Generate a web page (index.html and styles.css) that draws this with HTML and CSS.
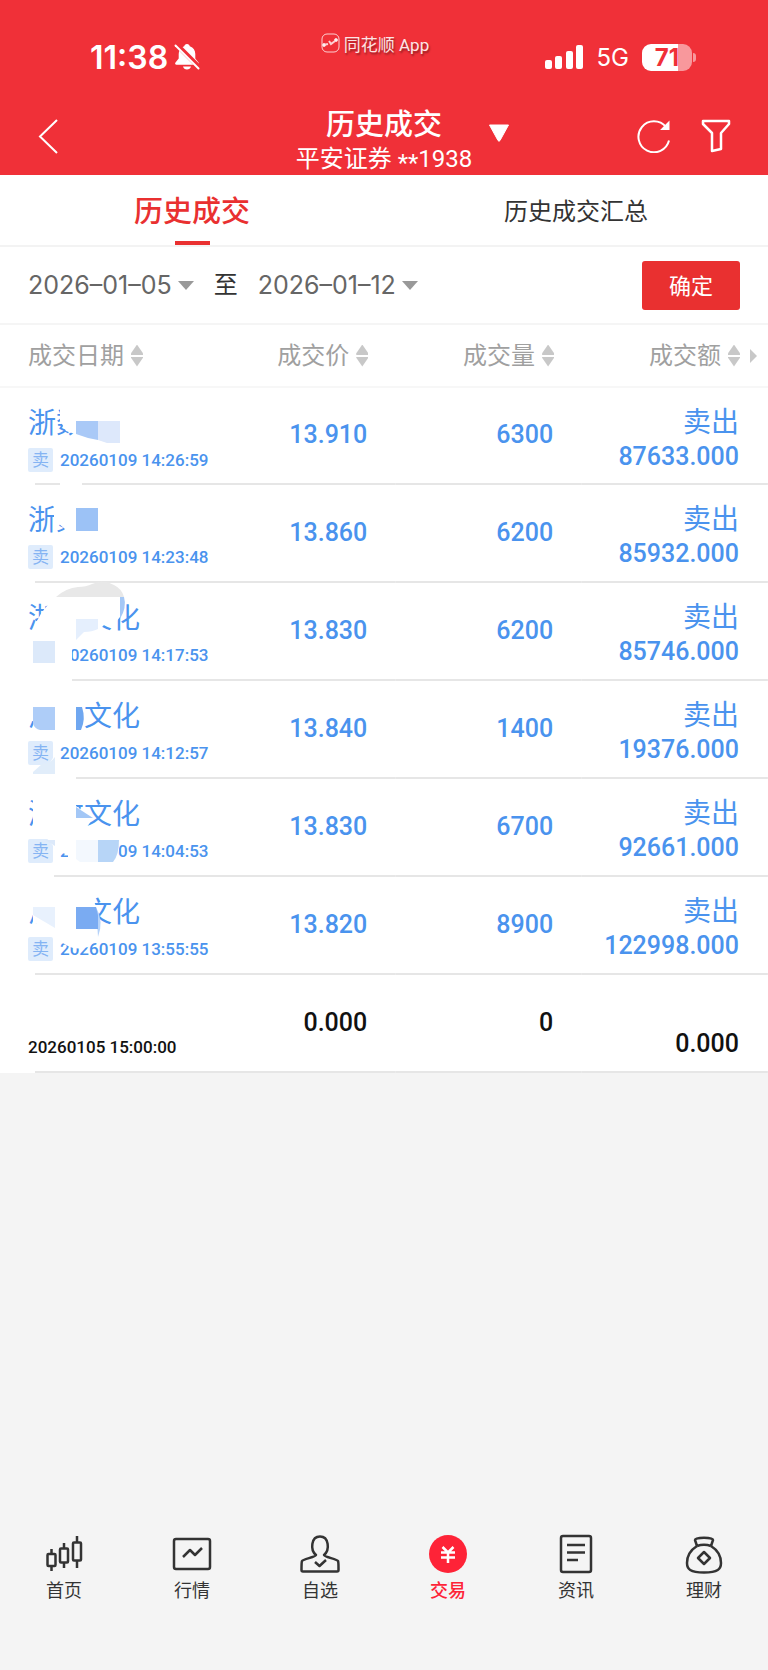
FILE: index.html
```
<!DOCTYPE html>
<html lang="zh-CN">

<head>
    <meta charset="UTF-8">
    <meta name="viewport" content="width=device-width, initial-scale=1.0">
    <title>历史成交</title>
    <link rel="stylesheet" href="styles.css">
</head>

<body>
    <header class="header">
        <div class="status">
            <div class="status-left">
                <span class="clock">11:38</span>
                <svg width="26" height="28" viewBox="0 0 26 28">
                    <path d="M13 1c-1.600 0-2.600 1-2.800 2.300C6.500 4.500 4.700 7.500 4.700 11v4.500L1.500 19.500c-.8 1.200-.3 2.300 1 2.300h21c1.300 0 1.800-1.100 1-2.300l-3.200-4V11c0-3.500-1.800-6.500-5.500-7.700C15.600 2 14.600 1 13 1zM9 23.500h8c-.5 2-2 3-4 3s-3.500-1-4-3z" fill="#fff"/>
                    <path d="M2 1L26 25" stroke="#f03038" stroke-width="5"/>
                    <path d="M1.500 2.500L24.500 25.500" stroke="#fff" stroke-width="2" stroke-linecap="round"/>
                </svg>
            </div>
            <div class="brand">
                <svg width="20" height="20" viewBox="0 0 20 20" fill="none" stroke="#fcd0d2">
                    <rect x="1" y="1" width="17" height="18" rx="5"/>
                    <path d="M2 12l5-1M8 8l2 3 4-3" stroke-width="2"/>
                    <circle cx="3" cy="12" r="1.500" fill="#fff"/>
                    <circle cx="15" cy="7" r="1.500" fill="#fff"/>
                </svg>
                <span>同花顺 App</span>
            </div>
            <div class="status-right">
                <svg width="39" height="24" viewBox="0 0 39 24" fill="#fff">
                    <rect x="0" y="15" width="7" height="9" rx="2"/>
                    <rect x="10" y="11" width="7" height="13" rx="2"/>
                    <rect x="21" y="6" width="7" height="18" rx="2"/>
                    <rect x="31" y="0" width="7" height="24" rx="2"/>
                </svg>
                <span class="network">5G</span>
                <span class="battery">71</span>
            </div>
        </div>
        <div class="navbar">
            <button class="icon-btn back" aria-label="返回">
                <svg width="22" height="36" viewBox="0 0 22 36" fill="none" stroke="#fff" stroke-width="2">
                    <path d="M20 2L3 18.500 20 35"/>
                </svg>
            </button>
            <div class="title">
                <h1>历史成交</h1>
                <p>平安证券 <span class="stars">**</span>1938</p>
            </div>
            <div class="nav-actions">
                <button class="icon-btn switch" aria-label="切换账户">
                    <svg width="22" height="18" viewBox="0 0 22 18">
                        <path d="M1.500 1h19L12 16.500q-1 1.500-2 0z" fill="#fff" stroke="#fff" stroke-linejoin="round"/>
                    </svg>
                </button>
                <button class="icon-btn" aria-label="刷新">
                    <svg width="34" height="34" viewBox="0 0 34 34" fill="none" stroke="#fff" stroke-width="2">
                        <path d="M32 21.500A15.500 15.500 0 1 1 29 8"/>
                        <path d="M31.500 4v6h-6z" fill="#fff"/>
                    </svg>
                </button>
                <button class="icon-btn" aria-label="筛选">
                    <svg width="30" height="34" viewBox="0 0 30 34" fill="none" stroke="#fff" stroke-width="2.500" stroke-linejoin="round">
                        <path d="M2 2h26v3l-8 9v16l-9 2V14L2 5z"/>
                    </svg>
                </button>
            </div>
        </div>
    </header>

    <div class="tabs">
        <button class="tab active">历史成交</button>
        <button class="tab">历史成交汇总</button>
    </div>

    <div class="filter">
        <button class="date">2026–01–05</button>
        <span class="to">至</span>
        <button class="date">2026–01–12</button>
        <button class="confirm">确定</button>
    </div>

    <table class="deals">
        <thead>
            <tr>
                <th><button class="sort">成交日期</button></th>
                <th><button class="sort">成交价</button></th>
                <th><button class="sort">成交量</button></th>
                <th><button class="sort">成交额</button><span class="more"></span></th>
            </tr>
        </thead>
        <tbody>
            <tr>
                <td>
                    <div class="name">浙数文化</div>
                    <div class="time"><span class="side">卖</span>20260109 14:26:59</div>
                    <svg class="mask" width="210" height="98" viewBox="0 0 210 98">
                        <path d="M60 14H145V52H75V46L66 43 62 36 60 33zM60 95H82V99H60z" fill="#fff"/>
                        <path d="M76 33H98V52L88 50 76 46z" fill="#a9c9f7"/>
                        <path d="M98 33H120V55H107L98 52z" fill="#dde8fb"/>
                    </svg>
                </td>
                <td>13.910</td>
                <td>6300</td>
                <td>
                    <div class="name">卖出</div>
                    <div class="amount">87633.000</div>
                </td>
            </tr>
            <tr>
                <td>
                    <div class="name">浙数文化</div>
                    <div class="time"><span class="side">卖</span>20260109 14:23:48</div>
                    <svg class="mask" width="210" height="98" viewBox="0 0 210 98">
                        <path d="M54 12H145V52H65V44L59 39 54 52z" fill="#fff"/>
                        <path d="M76 23H98V46H76z" fill="#9cc2f6"/>
                    </svg>
                </td>
                <td>13.860</td>
                <td>6200</td>
                <td>
                    <div class="name">卖出</div>
                    <div class="amount">85932.000</div>
                </td>
            </tr>
            <tr>
                <td>
                    <div class="name">浙数文化</div>
                    <div class="time"><span class="side">卖</span>20260109 14:17:53</div>
                    <svg class="mask" width="210" height="98" viewBox="0 0 210 98">
                        <path d="M56 14H120V34L116 39V41L104 42 98 48Q92 49 84 50L76 58 72 64V99H24V52L33 48Q39 28 56 14z" fill="#fff"/>
                        <path d="M56 14Q66 5 78 4 86 4 92 1 104-4 114 2 122 6 124 14z" fill="#e8e8e8"/>
                        <path d="M120 14H124Q127 24 120 36z" fill="#a5c8f6"/>
                        <path d="M33 58H55V80H33z" fill="#dce9fa"/>
                        <path d="M76 36H98V46Q92 49 84 49L76 57z" fill="#e5effd"/>
                    </svg>
                </td>
                <td>13.830</td>
                <td>6200</td>
                <td>
                    <div class="name">卖出</div>
                    <div class="amount">85746.000</div>
                </td>
            </tr>
            <tr>
                <td>
                    <div class="name">浙数文化</div>
                    <div class="time"><span class="side">卖</span>20260109 14:12:57</div>
                    <svg class="mask" width="210" height="98" viewBox="0 0 210 98">
                        <path d="M24 10H77L84 26V52H33V40H24zM24 95H76V99H24zM55 74V93H42z" fill="#fff"/>
                        <path d="M33 26H55V49H40Q35 48 33 43z" fill="#aecdf8"/>
                        <path d="M76 26H82Q86 38 81 49H76z" fill="#6fa7f0"/>
                        <path d="M55 76V93H33V91L42 83Q50 83 55 76z" fill="#e1edfa"/>
                    </svg>
                </td>
                <td>13.840</td>
                <td>1400</td>
                <td>
                    <div class="name">卖出</div>
                    <div class="amount">19376.000</div>
                </td>
            </tr>
            <tr>
                <td>
                    <div class="name">浙数文化</div>
                    <div class="time"><span class="side">卖</span>20260109 14:04:53</div>
                    <svg class="mask" width="210" height="98" viewBox="0 0 210 98">
                        <path d="M33 12H76V27L94 40 92 41 84 52H33zM44 56H118Q122 72 114 84H68V76L60 73H54V68zM24 95H54V99H24z" fill="#fff"/>
                        <path d="M76 28L93 39H76z" fill="#a3c7f6"/>
                        <path d="M45 61H55V67z" fill="#dce9fa"/>
                        <path d="M76 61H98V83H80L76 80z" fill="#f3f8fe"/>
                        <path d="M98 61H119Q119 76 113 83H98z" fill="#b7d5f7"/>
                    </svg>
                </td>
                <td>13.830</td>
                <td>6700</td>
                <td>
                    <div class="name">卖出</div>
                    <div class="amount">92661.000</div>
                </td>
            </tr>
            <tr>
                <td>
                    <div class="name">浙数文化</div>
                    <div class="time"><span class="side">卖</span>20260109 13:55:55</div>
                    <svg class="mask" width="210" height="98" viewBox="0 0 210 98">
                        <path d="M24 12H93V22L98 34V62L88 70Q76 74 66 68L60 64 55 52 33 46V38H24z" fill="#fff"/>
                        <path d="M33 30H55V51L33 38z" fill="#e8f1fd"/>
                        <path d="M96 30Q104 44 98 60z" fill="#b5d2f9"/>
                        <path d="M76 30H96L98 38V52H76z" fill="#7aabf2"/>
                    </svg>
                </td>
                <td>13.820</td>
                <td>8900</td>
                <td>
                    <div class="name">卖出</div>
                    <div class="amount">122998.000</div>
                </td>
            </tr>
            <tr class="empty">
                <td>
                    <div class="name"></div>
                    <div class="time">20260105 15:00:00</div>
                </td>
                <td>0.000</td>
                <td>0</td>
                <td>
                    <div class="name"></div>
                    <div class="amount">0.000</div>
                </td>
            </tr>
        </tbody>
    </table>

    <nav class="tabbar">
        <a href="#">
            <svg viewBox="0 0 40 40">
                <path d="M7.500 15v5M7.500 32v5M20 9v5M20 29v5M33 2v6M33 27v7"/>
                <rect x="3.500" y="20" width="8" height="12" rx="1"/>
                <rect x="16" y="14.500" width="8" height="14" rx="1"/>
                <rect x="29" y="8.500" width="8" height="18" rx="1"/>
            </svg>
            <span>首页</span>
        </a>
        <a href="#">
            <svg viewBox="0 0 40 40">
                <rect x="2" y="5" width="36" height="30" rx="2"/>
                <path d="M11 23l7-7 5 5 7-7"/>
            </svg>
            <span>行情</span>
        </a>
        <a href="#">
            <svg viewBox="0 0 40 40">
                <path d="M16 21C10 16 11 2.500 20 2.500s10 13.500 4 18.500c0 2 13 4 14 6 .6 1 .5 6 .5 9 0 1-.5 1.500-1.500 1.500H3c-1 0-1.500-.5-1.500-1.500 0-3 0-8 .5-9 1-2 14-4 14-6z"/>
                <path d="M15 28l4.500 4 6.500-6"/>
            </svg>
            <span>自选</span>
        </a>
        <a href="#" class="current">
            <svg viewBox="0 0 40 40">
                <circle cx="20" cy="20" r="19" fill="#fe2337" stroke="none"/>
                <path d="M14.500 13L20 18.500l5.500-5.500M20 18.500V29M13 18.500h14M13 23.500h14" stroke="#fff"/>
            </svg>
            <span>交易</span>
        </a>
        <a href="#">
            <svg viewBox="0 0 40 40">
                <rect x="5" y="2" width="30" height="36" rx="2"/>
                <path d="M11 11h18M11 18.500h18M11 26h11"/>
            </svg>
            <span>资讯</span>
        </a>
        <a href="#">
            <svg viewBox="0 0 40 40">
                <path d="M13 12L11 6c0-3 18-3 18 0l-2 6M13 12c4-1.500 10-1.500 14 0"/>
                <path d="M13 12C5 17 3 24 3 29c0 6 3 9.500 17 9.500s17-3.500 17-9.500c0-5-2-12-10-17"/>
                <path d="M20 18l6 6-6 6-6-6z"/>
            </svg>
            <span>理财</span>
        </a>
    </nav>
</body>

</html>
```
FILE: styles.css
```
* {
    box-sizing: border-box;
}

body {
    margin: 0;
    min-height: 100vh;
    display: flex;
    flex-direction: column;
    background-color: #f4f4f4;
    color: #333;
    font-family: Roboto, "Noto Sans CJK SC", sans-serif;
}

button {
    padding: 0;
    border: none;
    background: none;
    color: inherit;
    font-family: inherit;
    cursor: pointer;
}

svg {
    display: block;
}

/* header */
.header {
    background-color: #f03038;
    color: #fff;
}

.status {
    display: grid;
    grid-template-columns: 1fr auto 1fr;
    height: 88px;
    padding: 26px 76px 0 90px;
}

.status-left,
.status-right {
    display: flex;
    align-items: center;
    font-family: Inter, sans-serif;
}

.status-left {
    gap: 6px;
}

.status-right {
    justify-content: flex-end;
    gap: 13px;
}

.clock {
    font-size: 32px;
    font-weight: 600;
}

.network {
    font-size: 24px;
}

.battery {
    position: relative;
    width: 50px;
    height: 27px;
    border-radius: 9px;
    background: linear-gradient(to right, #fff 72%, #f8989c 72%);
    color: #f03038;
    font-size: 24px;
    font-weight: 700;
    line-height: 27px;
    text-align: center;
}

.battery::after {
    content: "";
    position: absolute;
    top: 9px;
    right: -4px;
    width: 3px;
    height: 9px;
    border-radius: 0 3px 3px 0;
    background-color: #f8989c;
}

.brand {
    display: flex;
    align-items: center;
    align-self: start;
    gap: 3px;
    margin-right: 32px;
    height: 34px;
    color: #fde4e5;
    font-size: 17px;
    text-shadow: 1px 2px 2px rgba(0, 0, 0, 0.4);
}

.navbar {
    display: grid;
    grid-template-columns: 1fr auto 1fr;
    height: 87px;
    padding: 8px 37px 0;
}

.back {
    justify-self: start;
}

.title {
    align-self: end;
    text-align: center;
}

.title h1 {
    margin: 0;
    font-size: 29px;
    font-weight: 500;
    line-height: 36px;
}

.title p {
    margin: 0;
    font-size: 24px;
    line-height: 32px;
}

.stars {
    line-height: 1;
    vertical-align: -4px;
}

.nav-actions {
    display: flex;
    align-items: center;
    gap: 30px;
}

.switch {
    margin: 0 auto 6px 16px;
}

/* tabs */
.tabs {
    display: flex;
    height: 72px;
    border-bottom: 2px solid #f3f3f3;
    background-color: #fff;
}

.tab {
    position: relative;
    flex: 1;
    padding-bottom: 2px;
    font-size: 24px;
}

.tab.active {
    color: #e93030;
    font-size: 29px;
    font-weight: 500;
}

.tab.active::after {
    content: "";
    position: absolute;
    bottom: 0;
    left: 50%;
    width: 35px;
    height: 4px;
    margin-left: -17px;
    background-color: #e93030;
}

/* date range */
.filter {
    display: flex;
    align-items: center;
    height: 78px;
    padding: 0 28px;
    border-bottom: 2px solid #f5f5f5;
    background-color: #fff;
}

.date {
    display: flex;
    align-items: center;
    gap: 6px;
    color: #666;
    font-family: Inter, sans-serif;
    font-size: 25px;
}

.date::after {
    content: "";
    border: 8px solid transparent;
    border-top: 9px solid #999;
    border-bottom: none;
}

.to {
    margin: 0 20px;
    font-size: 24px;
    line-height: 32px;
}

.confirm {
    width: 98px;
    height: 49px;
    margin-left: auto;
    padding-bottom: 2px;
    border-radius: 3px;
    background-color: #e93030;
    color: #fff;
    font-size: 22px;
}

/* deals */
.deals {
    width: 100%;
    table-layout: fixed;
    border-collapse: collapse;
    background-color: #fff;
    color: #4a93ee;
}

.deals th {
    position: relative;
    width: 24.2%;
    height: 62px;
    padding: 0 28px 0 0;
    border-bottom: 2px solid #f7f7f7;
    text-align: right;
}

.deals th:first-child {
    width: 27.4%;
    padding: 0 0 0 28px;
    text-align: left;
}

.sort {
    display: inline-flex;
    align-items: center;
    gap: 7px;
    color: #a0a0a0;
    font-size: 24px;
    line-height: 34px;
    white-space: nowrap;
}

.sort::after {
    content: "";
    width: 12px;
    height: 22px;
    background: linear-gradient(#c8c8c8 10px, #fff 10px, #fff 12px, #c8c8c8 12px);
    clip-path: polygon(50% 0, 100% 40%, 100% 60%, 50% 100%, 0 60%, 0 40%);
}

.more {
    position: absolute;
    top: 24px;
    right: 11px;
    border: 7px solid transparent;
    border-left-color: #c8c8c8;
    border-right: none;
}

.deals td {
    position: relative;
    height: 98px;
    padding: 0 29px 3px 0;
    background: linear-gradient(#e6e6e6, #e6e6e6) bottom right / 100% 2px no-repeat;
    font-size: 25px;
    font-weight: 500;
    line-height: 32px;
    text-align: right;
}

.deals td:first-child {
    padding: 10px 0 0 28px;
    background-size: calc(100% - 35px) 2px;
    text-align: left;
}

.deals td:last-child {
    padding-top: 4px;
    padding-bottom: 0;
}

.name {
    height: 36px;
    font-size: 28px;
    font-weight: 400;
    line-height: 36px;
}

.time {
    display: flex;
    align-items: center;
    gap: 7px;
    height: 36px;
    font-size: 17px;
    white-space: nowrap;
}

.side {
    width: 25px;
    border-radius: 2px;
    background-color: #dfecfc;
    color: #85b4f3;
    font-size: 17px;
    font-weight: 400;
    line-height: 24px;
    text-align: center;
}

.mask {
    position: absolute;
    top: 0;
    left: 0;
    overflow: visible;
}

.empty {
    color: #111;
}

/* bottom bar */
.tabbar {
    display: flex;
    margin-top: auto;
    padding-bottom: 66px;
}

.tabbar a {
    flex: 1;
    display: flex;
    flex-direction: column;
    align-items: center;
    gap: 4px;
    color: #333;
    font-size: 18px;
    line-height: 26px;
    text-decoration: none;
}

.tabbar svg {
    width: 40px;
    height: 40px;
    fill: none;
    stroke: #333;
    stroke-width: 2.5;
    stroke-linejoin: round;
}

.tabbar .current {
    color: #fe2337;
    font-weight: 500;
}
```
